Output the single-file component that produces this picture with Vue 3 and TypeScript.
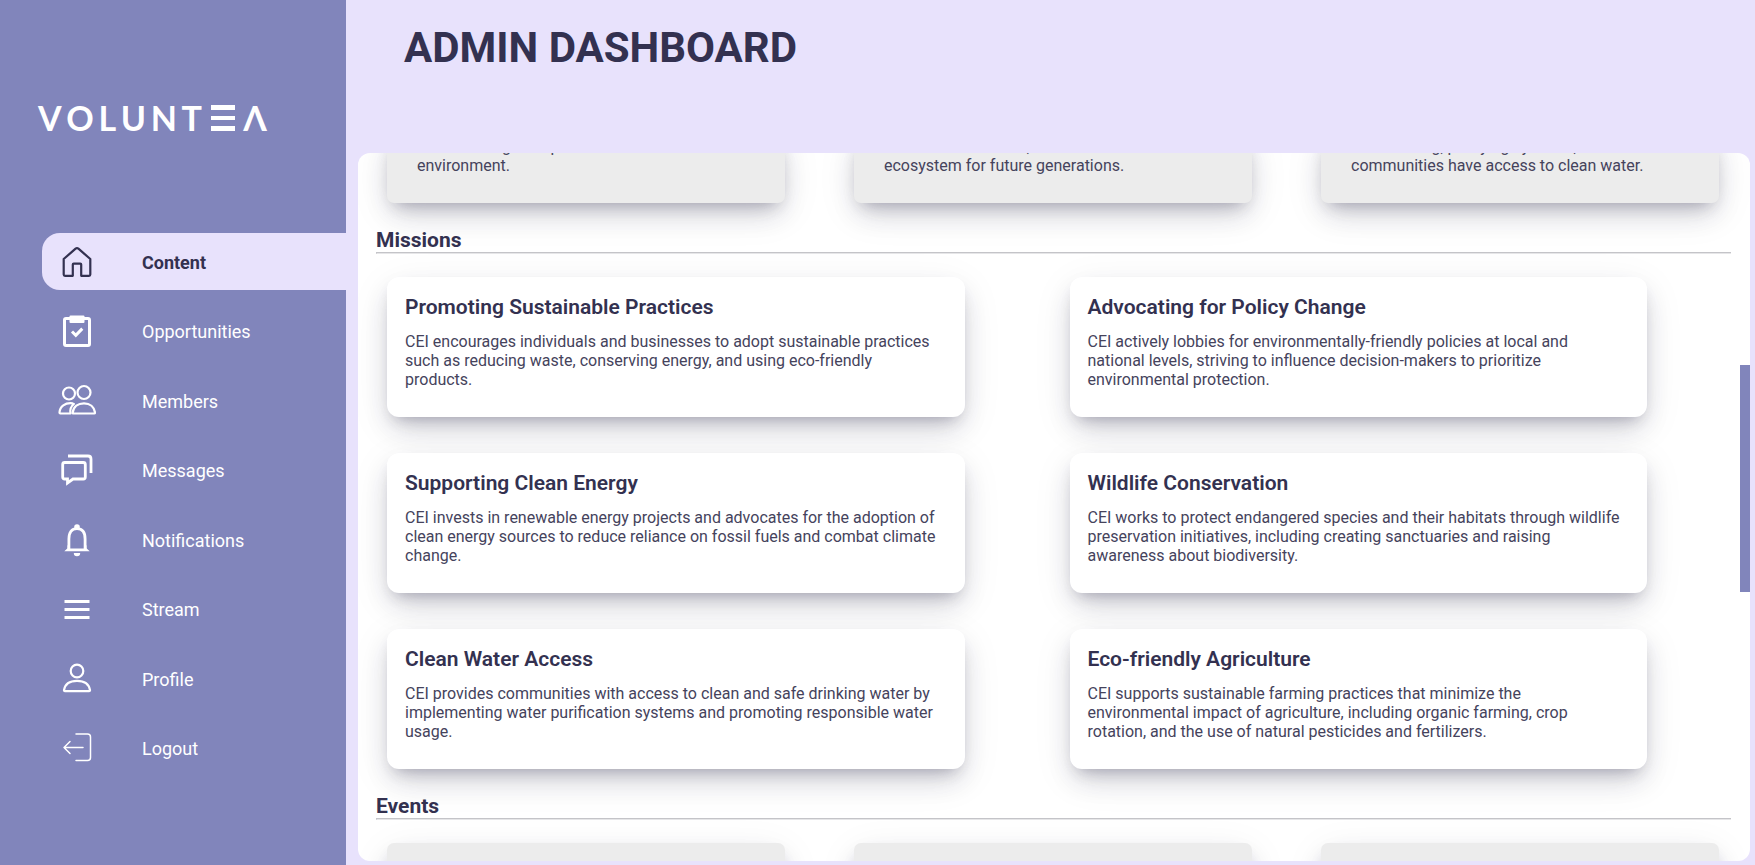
<script setup lang="ts">
import { ref } from 'vue'

interface NavItem {
  id: string
  label: string
}

interface Mission {
  title: string
  text: string
}

const navItems: NavItem[] = [
  { id: 'content', label: 'Content' },
  { id: 'opportunities', label: 'Opportunities' },
  { id: 'members', label: 'Members' },
  { id: 'messages', label: 'Messages' },
  { id: 'notifications', label: 'Notifications' },
  { id: 'stream', label: 'Stream' },
  { id: 'profile', label: 'Profile' },
  { id: 'logout', label: 'Logout' },
]

const active = ref('content')

const causes: string[][] = [
  ['and restoring the open', 'environment.'],
  ['to maintain a robust, diverse', 'ecosystem for future generations.'],
  ['constructing, purifying systems, we ensure', 'communities have access to clean water.'],
]

const missions: Mission[] = [
  {
    title: 'Promoting Sustainable Practices',
    text: 'CEI encourages individuals and businesses to adopt sustainable practices such as reducing waste, conserving energy, and using eco-friendly products.',
  },
  {
    title: 'Advocating for Policy Change',
    text: 'CEI actively lobbies for environmentally-friendly policies at local and national levels, striving to influence decision-makers to prioritize environmental protection.',
  },
  {
    title: 'Supporting Clean Energy',
    text: 'CEI invests in renewable energy projects and advocates for the adoption of clean energy sources to reduce reliance on fossil fuels and combat climate change.',
  },
  {
    title: 'Wildlife Conservation',
    text: 'CEI works to protect endangered species and their habitats through wildlife preservation initiatives, including creating sanctuaries and raising awareness about biodiversity.',
  },
  {
    title: 'Clean Water Access',
    text: 'CEI provides communities with access to clean and safe drinking water by implementing water purification systems and promoting responsible water usage.',
  },
  {
    title: 'Eco-friendly Agriculture',
    text: 'CEI supports sustainable farming practices that minimize the environmental impact of agriculture, including organic farming, crop rotation, and the use of natural pesticides and fertilizers.',
  },
]

const eventCount = 3
</script>

<template>
  <div class="page">
    <aside class="sidebar">
      <div class="logo" role="img" aria-label="VOLUNTEA">
        <span v-for="letter in 'VOLUNT'" :key="letter">{{ letter }}</span>
        <span class="bars"></span>
        <span>Λ</span>
      </div>

      <nav class="nav">
        <a
          v-for="item in navItems"
          :key="item.id"
          :href="'#' + item.id"
          class="nav-item"
          :class="{ active: active === item.id }"
          @click.prevent="active = item.id"
        >
          <svg class="icon" viewBox="0 0 38 38" aria-hidden="true">
            <path
              v-if="item.id === 'content'"
              d="M5.700 16 17.600 5.700q1.400-1.100 2.800 0l11.900 10.300v15.500q0 1.300-1.300 1.300h-7.800v-11.300q0-.9-.9-.9h-6.600q-.9 0-.9.9v11.300H7q-1.300 0-1.300-1.300z"
            />
            <g v-else-if="item.id === 'opportunities'">
              <rect x="6.500" y="6.500" width="25" height="27" rx="1.500" stroke-width="3" />
              <rect x="11.500" y="3.500" width="15" height="7.500" rx="1" class="solid" />
              <path d="m14 19.500 3.800 3.800 6.500-6.700" stroke-width="3" stroke-linecap="butt" stroke-linejoin="miter" />
            </g>
            <g v-else-if="item.id === 'members'" stroke-width="2.200">
              <circle cx="11" cy="12.500" r="6" />
              <circle cx="26" cy="11.500" r="6.500" />
              <path d="M14.500 22.300C7 21.500 1.800 25.500 1.500 31.500q0 .9.900 1h10.200c-.8-3.500.3-7.200 3.300-9.500" />
              <path d="M15.500 32.500q-.9-.1-.8-1c.8-5.800 5.300-9.200 11.300-9.200S36.200 25.800 37 31.500q.1.900-.8 1z" />
            </g>
            <g v-else-if="item.id === 'messages'" stroke-width="2.800" stroke-linecap="butt">
              <path d="M6.700 11.500h18.600q2 0 2 2v12.500q0 2-2 2H15L9.500 32V28H6.700q-2 0-2-2V13.500q0-2 2-2z" stroke-linejoin="miter" />
              <path d="M10 5h20q3 0 3 3v14" />
            </g>
            <g v-else-if="item.id === 'notifications'">
              <path d="M10.900 29V19q0-10.300 8.100-10.300T27.100 19v10" stroke-width="2.800" />
              <path d="M9.500 25v3.200l-3.200 3h25.400l-3.200-3V25l-2.500 3.500H12z" class="solid" />
              <circle cx="19" cy="7" r="2.800" class="solid" />
              <path d="M15.800 33h6.400a3.200 3.200 0 0 1-6.400 0z" class="solid" />
            </g>
            <path v-else-if="item.id === 'stream'" d="M6.500 11.500h25M6.500 19.500h25M6.500 27.500h25" stroke-width="3" stroke-linecap="butt" />
            <g v-else-if="item.id === 'profile'">
              <circle cx="19" cy="12" r="6.300" />
              <path d="M7 32.200q-1.200 0-1-1.200c1-6 6-9.200 13-9.200s12 3.200 13 9.200q.2 1.200-1 1.200z" />
            </g>
            <g v-else stroke-width="1.500">
              <path d="M18 6h11.500q3 0 3 3v20.500q0 3-3 3H18M25 19.500H6M12 13.500l-6 6 6 6" />
            </g>
          </svg>
          <span class="nav-label">{{ item.label }}</span>
        </a>
      </nav>
    </aside>

    <main class="main">
      <header class="header">
        <h1>ADMIN DASHBOARD</h1>
      </header>

      <div class="panel">
        <div class="scroll">
          <section class="causes">
            <article v-for="(lines, i) in causes" :key="i" class="tile">
              <p v-for="line in lines" :key="line">{{ line }}</p>
            </article>
          </section>

          <section>
            <h2>Missions</h2>
            <hr />
            <div class="missions">
              <article v-for="mission in missions" :key="mission.title" class="mission">
                <h3>{{ mission.title }}</h3>
                <p>{{ mission.text }}</p>
              </article>
            </div>
          </section>

          <section>
            <h2>Events</h2>
            <hr />
            <div class="events">
              <article v-for="n in eventCount" :key="n" class="tile"></article>
            </div>
          </section>
        </div>
        <div class="thumb"></div>
      </div>
    </main>
  </div>
</template>

<style>
body {
  margin: 0;
}
</style>

<style scoped>
.page {
  display: flex;
  height: 100vh;
  overflow: hidden;
  background: #e8e2fc;
  color: #333150;
  font-family: Roboto, "Liberation Sans", sans-serif;
}

.sidebar {
  flex: none;
  width: 346px;
  box-sizing: border-box;
  padding: 96px 0 0 38px;
  background: #8185bb;
}

.logo {
  display: flex;
  align-items: center;
  justify-content: space-between;
  width: 229px;
  height: 44px;
  line-height: 44px;
  color: #fff;
  font-family: Lato, sans-serif;
  font-size: 34px;
  font-weight: 700;
}

.bars {
  width: 24px;
  height: 16px;
  margin: 0 4px;
  border: solid #fff;
  border-width: 5px 0;
  background: linear-gradient(#fff, #fff) center / 100% 4px no-repeat;
}

.nav {
  display: flex;
  flex-direction: column;
  justify-content: space-between;
  height: 543px;
  margin: 93px 0 0 4px;
}

.nav-item {
  display: flex;
  align-items: center;
  gap: 46px;
  height: 57px;
  padding-left: 16px;
  border-radius: 18px 0 0 18px;
  color: #fff;
  font-size: 18px;
  text-decoration: none;
}

.nav-item.active {
  background: #e8e2fc;
  color: #333150;
  font-weight: 700;
}

.nav-label {
  padding-top: 2px;
}

.icon {
  width: 38px;
  height: 38px;
  fill: none;
  stroke: currentColor;
  stroke-width: 2.2;
  stroke-linecap: round;
  stroke-linejoin: round;
}

.solid {
  fill: currentColor;
  stroke: none;
}

.main {
  flex: 1;
  display: flex;
  flex-direction: column;
  min-width: 0;
  padding: 0 5px 4px 12px;
}

.header {
  height: 153px;
  flex: none;
  padding-left: 46px;
}

h1 {
  margin: 0;
  padding-top: 23px;
  font-size: 42px;
  line-height: 50px;
  font-weight: 700;
}

.panel {
  position: relative;
  flex: 1;
  min-height: 0;
  overflow: hidden;
  border-radius: 12px;
  background: #fff;
}

.scroll {
  margin-top: -20px;
  padding: 0 19px 0 18px;
}

.causes,
.events {
  display: grid;
  grid-template-columns: repeat(3, 1fr);
  gap: 69px;
  padding: 0 12px 0 11px;
}

.tile {
  border-radius: 7px;
  background: #ececec;
  box-shadow:
    0 10px 40px rgba(40, 38, 70, 0.08),
    0 14px 28px -6px rgba(40, 38, 70, 0.2),
    0 8px 16px -8px rgba(40, 38, 70, 0.32);
}

.causes .tile {
  height: 70px;
  box-sizing: border-box;
  padding: 4px 30px 0;
}

.events .tile {
  height: 200px;
}

p {
  margin: 0;
  color: #45435c;
  font-size: 16px;
  line-height: 19px;
}

h2 {
  margin: 26px 0 0;
  font-size: 21px;
  line-height: 23px;
  font-weight: 700;
}

hr {
  margin: 0;
  border: solid #c4c4c8;
  border-width: 1px 0 0 1px;
  border-bottom: 1px solid #e6e6e8;
}

.missions {
  display: grid;
  grid-template-columns: 1fr 1fr;
  gap: 36px 105px;
  padding: 23px 84px 0 11px;
}

.mission {
  min-height: 140px;
  box-sizing: border-box;
  padding: 18px 24px 18px 18px;
  border-radius: 12px;
  background: #fff;
  box-shadow:
    0 10px 40px rgba(40, 38, 70, 0.08),
    0 14px 28px -6px rgba(40, 38, 70, 0.2),
    0 8px 16px -8px rgba(40, 38, 70, 0.32);
}

h3 {
  margin: 0 0 13px;
  font-size: 21px;
  line-height: 24px;
  font-weight: 600;
}

.events {
  padding-top: 23px;
}

.thumb {
  position: absolute;
  top: 30%;
  right: 0;
  width: 10px;
  height: 32%;
  background: #8185bb;
}
</style>
